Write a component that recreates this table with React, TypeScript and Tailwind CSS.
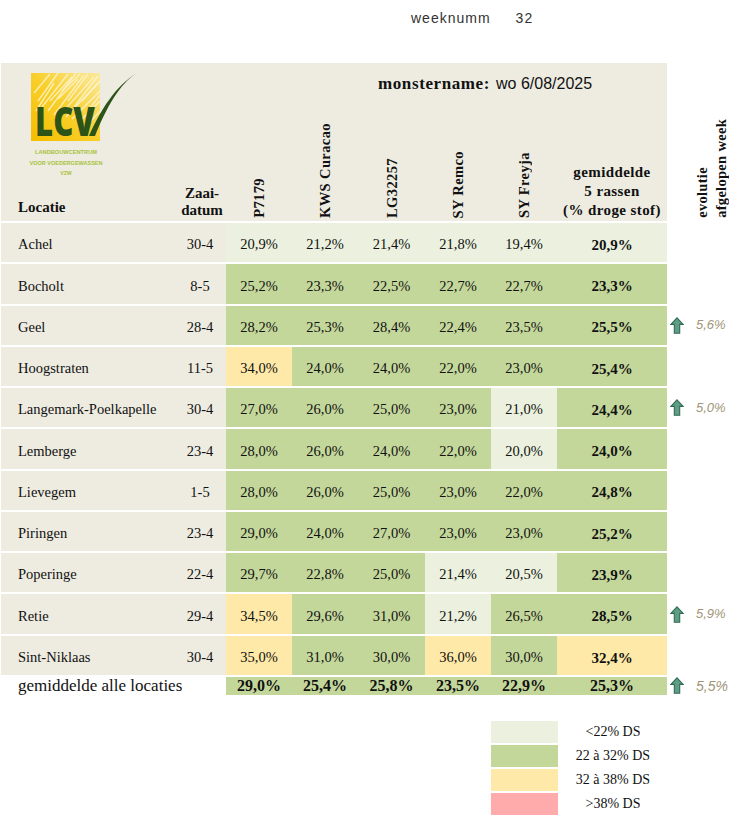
import React from 'react';

type Row = { name: string; zaai: string; vals: number[]; gem: number; evo?: string };

const rows: Row[] = [
  { name: 'Achel', zaai: '30-4', vals: [20.9, 21.2, 21.4, 21.8, 19.4], gem: 20.9 },
  { name: 'Bocholt', zaai: '8-5', vals: [25.2, 23.3, 22.5, 22.7, 22.7], gem: 23.3 },
  { name: 'Geel', zaai: '28-4', vals: [28.2, 25.3, 28.4, 22.4, 23.5], gem: 25.5, evo: '5,6%' },
  { name: 'Hoogstraten', zaai: '11-5', vals: [34.0, 24.0, 24.0, 22.0, 23.0], gem: 25.4 },
  { name: 'Langemark-Poelkapelle', zaai: '30-4', vals: [27.0, 26.0, 25.0, 23.0, 21.0], gem: 24.4, evo: '5,0%' },
  { name: 'Lemberge', zaai: '23-4', vals: [28.0, 26.0, 24.0, 22.0, 20.0], gem: 24.0 },
  { name: 'Lievegem', zaai: '1-5', vals: [28.0, 26.0, 25.0, 23.0, 22.0], gem: 24.8 },
  { name: 'Piringen', zaai: '23-4', vals: [29.0, 24.0, 27.0, 23.0, 23.0], gem: 25.2 },
  { name: 'Poperinge', zaai: '22-4', vals: [29.7, 22.8, 25.0, 21.4, 20.5], gem: 23.9 },
  { name: 'Retie', zaai: '29-4', vals: [34.5, 29.6, 31.0, 21.2, 26.5], gem: 28.5, evo: '5,9%' },
  { name: 'Sint-Niklaas', zaai: '30-4', vals: [35.0, 31.0, 30.0, 36.0, 30.0], gem: 32.4 },
];

const average = [29.0, 25.4, 25.8, 23.5, 22.9];
const cols = ['P7179', 'KWS Curacao', 'LG32257', 'SY Remco', 'SY Freyja'];
const colStarts = ['col-start-3', 'col-start-4', 'col-start-5', 'col-start-6', 'col-start-7'];
const widths = ['w-[66px]', 'w-[66px]', 'w-[67px]', 'w-[66px]', 'w-[66px]'];

const fmt = (v: number) => v.toFixed(1).replace('.', ',') + '%';

// same thresholds as the legend below the table
const cellBg = (v: number) =>
  v < 22 ? 'bg-[#ebf1de]' : v <= 32 ? 'bg-[#c4d79b]' : v <= 38 ? 'bg-[#ffe9a8]' : 'bg-[#ffabab]';

function UpArrow() {
  return (
    <svg width="14" height="17" viewBox="0 0 14 17" className="shrink-0">
      <path
        d="M7 0.8 L13.2 7.4 L9.7 7.4 L9.7 16.2 L4.3 16.2 L4.3 7.4 L0.8 7.4 Z"
        fill="#5f9d84"
        stroke="#2f6b55"
        strokeWidth="1.1"
      />
    </svg>
  );
}

function Evo({ value, big }: { value?: string; big?: boolean }) {
  if (!value) return <div className="w-[89px]" />;
  return (
    <div className="w-[89px] flex items-center pl-[3px] gap-[12px]">
      <UpArrow />
      <span
        className={`font-['Liberation_Sans',sans-serif] italic text-[#a09577] ${big ? 'text-[14px]' : 'text-[13px]'}`}
      >
        {value}
      </span>
    </div>
  );
}

function Logo() {
  const streaks = [
    [20, 40, 48, 2], [26, 44, 56, 4], [32, 44, 66, 6], [38, 46, 70, 12], [44, 48, 72, 20],
    [10, 30, 30, 2], [14, 36, 40, 3], [50, 52, 72, 30], [6, 22, 22, 3], [40, 30, 60, 3],
    [56, 58, 72, 40], [30, 28, 50, 8], [46, 36, 70, 5], [22, 30, 44, 6], [54, 30, 72, 10],
    [60, 40, 72, 24], [34, 20, 52, 3], [8, 40, 26, 12],
  ];
  return (
    <svg width="116" height="108" viewBox="0 0 116 108">
      <defs>
        <linearGradient id="lcvSun" x1="0" y1="1" x2="1" y2="0">
          <stop offset="0" stopColor="#f4bd00" />
          <stop offset="0.5" stopColor="#f8cf2a" />
          <stop offset="1" stopColor="#fbeaa0" />
        </linearGradient>
      </defs>
      <rect x="3" y="2" width="69" height="68" fill="url(#lcvSun)" />
      {streaks.map(([x1, y1, x2, y2], i) => (
        <line key={i} x1={x1} y1={y1} x2={x2} y2={y2} stroke="#fff6d2" strokeWidth="1.4" opacity="0.8" />
      ))}
      <text
        x="7"
        y="65"
        fontFamily="'Open Sans', 'Liberation Sans', sans-serif"
        fontWeight="800"
        fontSize="40"
        fill="#2c5419"
        textLength="60"
        lengthAdjust="spacingAndGlyphs"
      >
        LCV
      </text>
      <path d="M61 65 C 72 40, 88 14, 109 2 C 91 13, 78 38, 67 65 Z" fill="#2c5419" />
      <g fontFamily="'Liberation Sans', sans-serif" fontSize="5.2" fill="#a8c23c" textAnchor="middle" fontWeight="700">
        <text x="38" y="83" textLength="62" lengthAdjust="spacingAndGlyphs">LANDBOUWCENTRUM</text>
        <text x="38" y="94" textLength="73" lengthAdjust="spacingAndGlyphs">VOOR VOEDERGEWASSEN</text>
        <text x="38" y="104">VZW</text>
      </g>
    </svg>
  );
}

export default function App() {
  return (
    <div className="w-[756px] min-h-[818px] bg-white text-[#111] font-['Liberation_Serif',serif]">
      <div className="h-[63px] flex items-start pt-[8px] pl-[411px] gap-[25px] font-['Liberation_Sans',sans-serif] text-[14px] text-[#333] tracking-[1px]">
        <span>weeknumm</span>
        <span>32</span>
      </div>

      <div className="flex pl-[1px]">
        <div className="w-[666px] h-[158px] bg-[#eeece1] grid grid-cols-[171px_54px_66px_66px_67px_66px_66px_110px] grid-rows-[36px_122px]">
          <div className="row-span-2 flex flex-col pl-[27px] pt-[8px]">
            <Logo />
            <div className="mt-auto -ml-[10px] pb-[3px] font-bold text-[15px]">Locatie</div>
          </div>
          <div className="col-start-5 col-span-4 row-start-1 pl-[20px] pt-[8px] flex items-baseline gap-[6px]">
            <span className="font-bold text-[17px] tracking-[0.6px]">monstername:</span>
            <span className="font-['Liberation_Sans',sans-serif] text-[16px]">wo 6/08/2025</span>
          </div>
          <div className="col-start-2 row-start-2 flex flex-col justify-end items-center pb-[2px] pl-[6px] font-bold text-[15px] leading-[17px] text-center">
            <span>Zaai-</span>
            <span>datum</span>
          </div>
          {cols.map((c, i) => (
            <div key={c} className={`row-start-2 flex items-end justify-center pb-[3px] ${colStarts[i]}`}>
              <span className="[writing-mode:vertical-rl] rotate-180 font-bold text-[14.5px] leading-[16px] tracking-[0.4px]">{c}</span>
            </div>
          ))}
          <div className="col-start-8 row-start-2 flex flex-col justify-end items-center pb-[1px] font-bold text-[15px] leading-[19px] tracking-[0.4px] text-center">
            <span>gemiddelde</span>
            <span>5 rassen</span>
            <span>(% droge stof)</span>
          </div>
        </div>
        <div className="w-[89px] h-[158px] flex items-end pl-[26px] pb-[3px]">
          <span className="[writing-mode:vertical-rl] rotate-180 font-bold text-[14.5px] leading-[19px] tracking-[0.3px]">
            evolutie
            <br />
            afgelopen week
          </span>
        </div>
      </div>

      {rows.map((r) => (
        <div key={r.name} className="flex pl-[1px] mt-[2px] h-[39.27px] text-[14.5px]">
          <div className="w-[171px] bg-[#eeece1] flex items-center pl-[17px] pt-[5px]">{r.name}</div>
          <div className="w-[54px] bg-[#eeece1] flex items-center justify-center pl-[2px] pt-[5px]">{r.zaai}</div>
          {r.vals.map((v, i) => (
            <div key={i} className={`${widths[i]} ${cellBg(v)} flex items-center justify-center pt-[5px]`}>{fmt(v)}</div>
          ))}
          <div className={`w-[110px] ${cellBg(r.gem)} flex items-center justify-center pt-[5px] font-bold text-[15px]`}>{fmt(r.gem)}</div>
          <Evo value={r.evo} />
        </div>
      ))}

      <div className="flex pl-[1px] mt-[2px] h-[18px] overflow-hidden leading-[18px]">
        <div className="w-[225px] pl-[17px] text-[17px] whitespace-nowrap">gemiddelde alle locaties</div>
        {average.map((v, i) => (
          <div key={i} className={`${widths[i]} ${cellBg(v)} text-center font-bold text-[16px]`}>{fmt(v)}</div>
        ))}
        <div className="w-[110px] bg-[#c4d79b] text-center font-bold text-[16px]">{fmt(25.3)}</div>
        <Evo value="5,5%" big />
      </div>

      <div className="mt-[26px] flex flex-col gap-[2px] text-[14px]">
        {[
          ['bg-[#ebf1de]', '<22% DS'],
          ['bg-[#c4d79b]', '22 à 32% DS'],
          ['bg-[#ffe9a8]', '32 à 38% DS'],
          ['bg-[#ffabab]', '>38% DS'],
        ].map(([bg, label]) => (
          <div key={label} className="flex h-[22px] pl-[491px]">
            <div className={`w-[67px] ${bg}`} />
            <div className="w-[110px] flex items-center justify-center">{label}</div>
          </div>
        ))}
      </div>
    </div>
  );
}
